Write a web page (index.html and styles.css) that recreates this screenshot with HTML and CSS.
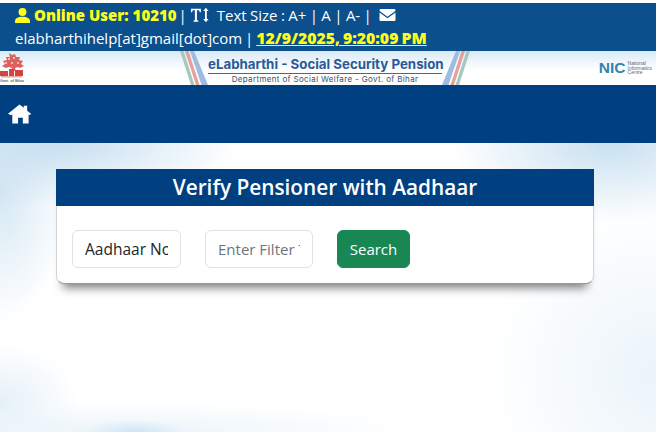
FILE: index.html
```html
<!DOCTYPE html>
<html lang="en">
<head>
<meta charset="utf-8">
<title>Verify Pensioner with Aadhaar</title>
<link rel="stylesheet" href="styles.css">
</head>
<body>
<header class="topbar">
  <div class="topline">
    <svg class="ico-user" viewBox="0 0 16 16"><circle cx="8" cy="4.200" r="4.200"/><path d="M0 16v-1.600C0 11 3 9.400 8 9.400s8 1.600 8 5V16z"/></svg>
    <strong class="online">Online User: 10210</strong>
    <span class="sep">|</span>
    <svg class="ico-size" viewBox="0 0 22 16"><path d="M1 1h11v4h-1.300L10 2.700H7.600v10.800l1.500.8V15.500H3.900v-1.200l1.500-.8V2.700H3L2.300 5H1z"/><path d="M17.500 0l3 3.500h-2v9h2l-3 3.500-3-3.500h2v-9h-2z"/></svg>
    <span class="size">Text Size : A+ | A | A- |</span>
    <svg class="ico-mail" viewBox="0 0 16 12"><path d="M1.300 0h13.400C15.400 0 16 .6 16 1.300c0 .4-.2.800-.5 1L8 7.700.5 2.300C.2 2.100 0 1.700 0 1.300 0 .6.6 0 1.300 0z"/><path d="M0 3.600l8 5.700 8-5.700v7.100c0 .7-.6 1.300-1.300 1.300H1.300C.6 12 0 11.400 0 10.700z"/></svg>
  </div>
  <div class="botline">elabharthihelp[at]gmail[dot]com | <strong class="clock">12/9/2025, 9:20:09 PM</strong></div>
</header>

<div class="banner">
  <div class="emblem">
    <svg viewBox="0 0 24 26" class="emblem-art">
      <path fill="#e0605c" d="M9 0l3 2 3-1 1 3 4 0-1 3 4 1-2 3 3 2-4 2-2-1-3 1 1 3h-5l1-3-3-1-3 1-4-2 3-2-2-3 4-1-1-3 4 0z"/>
      <path fill="#e8c2c0" d="M8 5h2v2H8zM13 4h2v2h-2zM5 9h2v2H5zM11 9h2v2h-2zM17 9h2v2h-2z"/>
      <path fill="#d2453f" d="M0 18h8v5H0zM15 17h8v6h-8zM9 16h5v7H9z"/>
      <path fill="#e8a8a4" d="M1 23h21v1.500H1z"/>
    </svg>
    <span class="emblem-text">Govt. of Bihar</span>
  </div>
  <div class="brand">
    <svg class="stripes" viewBox="0 0 28 34"><path fill="#a5c9bd" d="M0 0h3.500l11 34h-3.500z"/><path fill="#e5a099" d="M5 0h3.500l11 34H16z"/><path fill="#9dbce0" d="M10 0h4l14 34h-6.500z"/></svg>
    <div class="brand-text">
      <div class="brand-title">eLabharthi - Social Security Pension</div>
      <div class="brand-sub">Department of Social Welfare - Govt. of Bihar</div>
    </div>
    <svg class="stripes" viewBox="0 0 28 34"><path fill="#a5c9bd" d="M28 0h-3.500l-11 34H17z"/><path fill="#e5a099" d="M23 0h-3.500l-11 34H12z"/><path fill="#9dbce0" d="M18 0h-4L0 34h6.500z"/></svg>
  </div>
  <div class="nic">
    <span class="nic-mark">NIC</span>
    <span class="nic-text">National<br>Informatics<br>Centre</span>
  </div>
</div>

<nav class="navbar">
  <svg class="ico-home" viewBox="0 0 24 20"><path d="M12 0l4.500 3.600V1.500h3.500v5L24 9.700l-1.200 1.600-1.300-1V20h-6v-6h-5v6h-6V10.300l-1.300 1L0 9.700z"/></svg>
</nav>

<main class="content">
  <section class="card">
    <h1 class="card-title">Verify Pensioner with Aadhaar</h1>
    <form class="card-body">
      <select class="field field-select"><option>Aadhaar No</option></select>
      <input class="field field-input" type="text" placeholder="Enter Filter Text">
      <button class="btn" type="button">Search</button>
    </form>
  </section>
</main>
</body>
</html>
```

FILE: styles.css
```css
* { box-sizing: border-box; }
html, body { margin: 0; height: 100%; overflow: hidden; }
body {
  font-family: "Open Sans", "Noto Sans", sans-serif;
  padding-top: 3px;
  display: flex;
  flex-direction: column;
  background-color: #fff;
}
.topbar {
  height: 48px;
  background: #0b4f8c;
  color: #fff;
  font-size: 15px;
  padding: 1px 0 0 15px;
  line-height: 24px;
  white-space: nowrap;
}
.topline { display: flex; align-items: center; height: 22px; }
.botline { height: 24px; word-spacing: -1px; }
.ico-user { width: 15px; height: 15px; fill: #ffff1a; margin-right: 4px; }
.online { color: #ffff1a; font-size: 15px; font-weight: 800; word-spacing: 0; }
.sep { margin: 0 3px 0 2px; }
.ico-size { width: 20px; height: 16px; fill: #fff; margin-right: 7px; }
.size { margin-right: 7px; word-spacing: -.5px; }
.ico-mail { width: 17px; height: 12px; fill: #fff; }
.clock { color: #ffff1a; text-decoration: underline; font-size: 15.800px; font-weight: 800; }

.banner {
  height: 34px;
  flex: none;
  display: grid;
  grid-template-columns: 180px 290px 1fr;
  align-items: center;
  background: linear-gradient(#d8e9f5, #fff 55%);
  overflow: hidden;
}
.emblem { width: 24px; height: 34px; display: flex; flex-direction: column; align-items: center; overflow: hidden; }
.emblem-art { width: 24px; height: 26px; margin-top: 2px; flex: none; }
.emblem-text { font-size: 4px; line-height: 4px; white-space: nowrap; color: #222; font-family: "Liberation Sans", sans-serif; }
.brand { display: flex; align-items: center; height: 34px; }
.stripes { width: 28px; height: 34px; flex: none; }
.brand-text { width: 234px; text-align: center; padding-top: 4px; }
.brand-title {
  font-family: "Inter", "Liberation Sans", sans-serif;
  font-weight: 700;
  font-size: 13.300px;
  line-height: 17px;
  color: #2a5a98;
  border-bottom: 1px solid #3a6aa8;
  white-space: nowrap;
}
.brand-sub {
  font-family: "Inter", "Liberation Sans", sans-serif;
  font-size: 8px;
  letter-spacing: .35px;
  line-height: 11px;
  color: #3c4f66;
  white-space: nowrap;
}
.nic { display: flex; align-items: center; gap: 2px; padding-right: 4px; justify-content: flex-end; }
.nic-mark { font-family: "Liberation Sans", sans-serif; font-weight: 700; font-size: 15.500px; line-height: 14px; color: #2f86ad; }
.nic-text { font-family: "Liberation Sans", sans-serif; font-size: 5px; line-height: 4.500px; color: #667; }

.navbar {
  height: 58px;
  flex: none;
  background: #004080;
  display: flex;
  align-items: center;
  padding-left: 8px;
}
.ico-home { width: 23px; height: 20px; fill: #fff; }

.content {
  flex: 1;
  padding: 26px 62px 0 56px;
  background:
    radial-gradient(ellipse 50px 12px at 135px 100%, #cfe6f4, transparent),
    radial-gradient(ellipse 300px 30px at 120px 100%, #eaf4fa, transparent),
    radial-gradient(ellipse 160px 80px at 610px 0, #c8e0f0, transparent),
    radial-gradient(ellipse 170px 170px at 656px 230px, #ebf4fa, transparent),
    radial-gradient(ellipse 180px 65px at 60px 0, #c6def0, transparent),
    radial-gradient(ellipse 70px 130px at 0 50px, #d4e7f3, transparent),
    radial-gradient(ellipse 80px 60px at 0 260px, #e4f0f8, transparent),
    #fff;
}
.card {
  background: #fff;
  border: 1px solid #d5d5d5;
  border-top: 0;
  border-bottom-color: #999;
  border-radius: 0 0 8px 8px;
  box-shadow: 0 11px 10px -7px rgba(0,0,0,.5);
}
.card-title {
  margin: 0 -1px;
  height: 37px;
  background: #004080;
  color: #fff;
  text-align: center;
  font-size: 20.800px;
  font-weight: 600;
  line-height: 37px;
}
.card-body {
  display: flex;
  gap: 24px;
  padding: 24px 15px 15px;
}
.field {
  height: 38px;
  border: 1px solid #dee2e6;
  border-radius: 6px;
  background: #fff;
  font-family: inherit;
  font-size: 15px;
  padding: 0 12px;
  color: #212529;
}
.field-select { width: 109px; appearance: none; font-size: 15.500px; }
.field-input { width: 108px; }
.field-input::placeholder { color: #6c757d; opacity: 1; }
.btn {
  height: 38px;
  width: 73px;
  background: #198754;
  border: 1px solid #198754;
  border-radius: 6px;
  color: #fff;
  font-family: inherit;
  font-size: 15px;
  padding: 0;
}
```
